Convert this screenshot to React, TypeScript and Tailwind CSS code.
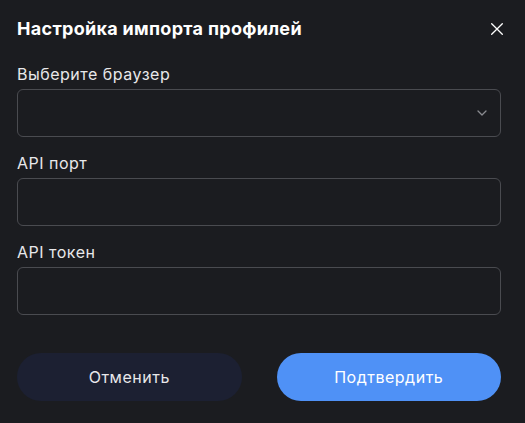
import React from "react";

export default function App() {
  return (
    <div
      className="w-[525px] h-[423px] bg-[#1b1c20] pl-[17px] pr-[24px] pt-[17px] text-white"
      style={{ fontFamily: "Inter, 'Noto Sans', sans-serif" }}
    >
      <div className="flex items-center justify-between h-[24px]">
        <h2 className="text-[18px] font-bold leading-[24px] tracking-[0.3px]">Настройка импорта профилей</h2>
        <button className="w-[13px] h-[13px] -mr-[2px] flex items-center justify-center text-white">
          <svg width="12" height="12" viewBox="0 0 12 12" fill="none" stroke="currentColor" strokeWidth="1.3" strokeLinecap="round">
            <path d="M0.7 0.7L11.3 11.3M11.3 0.7L0.7 11.3" />
          </svg>
        </button>
      </div>

      <div className="mt-[23px] flex flex-col">
        <label className="text-[16px] leading-[20px] tracking-[0.5px] text-[#e8e8ea]">Выберите браузер</label>
        <div className="mt-[5px] h-[48px] rounded-[6px] border border-[#4a4b50] flex items-center justify-end pr-[13px]">
          <svg width="10" height="6" viewBox="0 0 10 6" fill="none" stroke="#8a8b90" strokeWidth="1.3" strokeLinecap="round" strokeLinejoin="round">
            <path d="M1 1L5 5L9 1" />
          </svg>
        </div>

        <label className="mt-[16px] text-[16px] leading-[20px] tracking-[0.5px] text-[#e8e8ea]">API порт</label>
        <div className="mt-[5px] h-[48px] rounded-[6px] border border-[#4a4b50]" />

        <label className="mt-[16px] text-[16px] leading-[20px] tracking-[0.5px] text-[#e8e8ea]">API токен</label>
        <div className="mt-[5px] h-[48px] rounded-[6px] border border-[#4a4b50]" />
      </div>

      <div className="mt-[38px] flex gap-[35px]">
        <button className="flex-1 h-[48px] rounded-full bg-[#1c2032] text-[16px] tracking-[0.5px] text-[#e8e8ea]">Отменить</button>
        <button className="flex-1 h-[48px] rounded-full bg-[#4f91f6] text-[16px] tracking-[0.5px] text-white">Подтвердить</button>
      </div>
    </div>
  );
}
